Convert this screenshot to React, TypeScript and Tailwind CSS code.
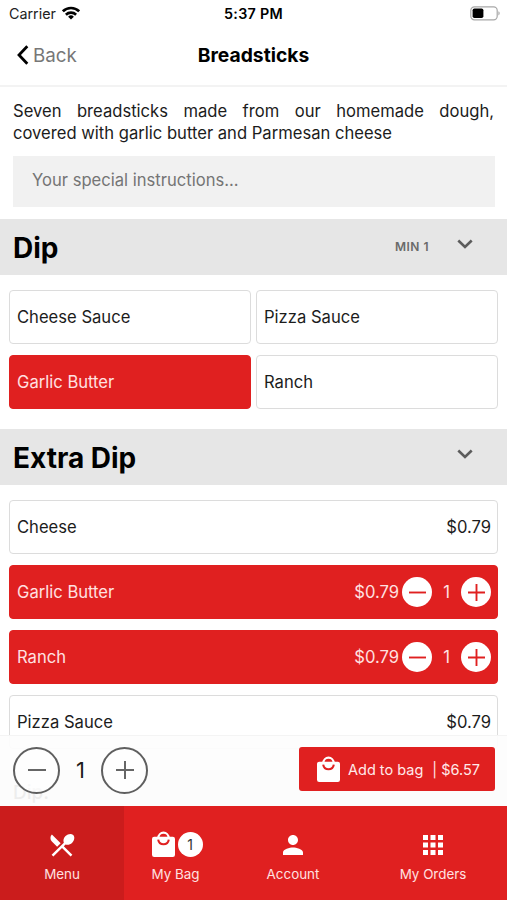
import { useState } from 'react';
import { MdApps, MdPerson, MdRestaurantMenu } from 'react-icons/md';
import clsx from 'clsx';

type Extra = { name: string; price: string; qty: number };

const DIPS = ['Cheese Sauce', 'Pizza Sauce', 'Garlic Butter', 'Ranch'];

const EXTRAS: Extra[] = [
  { name: 'Cheese', price: '$0.79', qty: 0 },
  { name: 'Garlic Butter', price: '$0.79', qty: 1 },
  { name: 'Ranch', price: '$0.79', qty: 1 },
  { name: 'Pizza Sauce', price: '$0.79', qty: 0 },
];

/* ─── Small drawings ───────────────────────────────────────────── */

function WifiIcon() {
  return (
    <svg viewBox="0 0 18 14" className="-mt-px ml-[6px] h-[14px] w-[18px]" fill="none" stroke="#000" strokeWidth="2.6">
      <path d="M0.9 5.3a11.6 11.6 0 0 1 16.2 0" />
      <path d="M3.9 8.7a7.3 7.3 0 0 1 10.2 0" />
      <path d="M9 13.6l-2.9-2.9a4.1 4.1 0 0 1 5.8 0z" fill="#000" stroke="none" />
    </svg>
  );
}

function BatteryIcon() {
  return (
    <svg viewBox="0 0 31 15" className="-mt-px h-[15px] w-[31px]">
      <rect x="0.8" y="0.8" width="26.4" height="13" rx="3.6" fill="#fff" stroke="#a8a8a8" strokeWidth="1.2" />
      <rect x="2.6" y="2.5" width="10.8" height="9.6" rx="1.8" fill="#000" />
      <path d="M28.4 5.2c1.7.6 1.7 3.6 0 4.2z" fill="#a8a8a8" />
    </svg>
  );
}

function BagIcon() {
  return (
    <svg viewBox="0 0 23 26" className="h-[26px] w-[23px] shrink-0" fill="none">
      <path d="M6.4 6.8a5.1 5.1 0 0 1 10.2 0" stroke="#fff" strokeWidth="2.2" />
      <rect y="5.8" width="23" height="20.2" rx="2.2" fill="#fff" />
      <path d="M6.2 8.6c.5 3 2.7 4.7 5.3 4.7s4.8-1.7 5.3-4.7" stroke="#e02020" strokeWidth="2.1" />
    </svg>
  );
}

function Chevron() {
  return (
    <svg viewBox="0 0 16 10" className="h-[10px] w-[16px]" fill="none" stroke="#5c5c5c" strokeWidth="2.6">
      <path d="M1.3 1.5L8 8l6.7-6.5" />
    </svg>
  );
}

function Sign({ plus, className }: { plus?: boolean; className: string }) {
  return (
    <svg viewBox="0 0 18 18" className={className} fill="none" stroke="currentColor" strokeWidth="2">
      <path d={plus ? 'M0 9h18M9 0v18' : 'M0 9h18'} />
    </svg>
  );
}

/* ─── Building blocks ──────────────────────────────────────────── */

function SectionHeader({ title, hint }: { title: string; hint?: string }) {
  return (
    <div className="flex h-14 shrink-0 items-center bg-[#e6e6e6] pr-[34px] pl-[13px]">
      <h2 className="mt-[2px] text-[28px] font-bold text-black">{title}</h2>
      {hint && <span className="ml-auto text-[12px] font-semibold tracking-[0.5px] text-[#6a6a6a]">{hint}</span>}
      <span className={clsx('-mt-[6px]', hint ? 'ml-[28px]' : 'ml-auto')}>
        <Chevron />
      </span>
    </div>
  );
}

function RoundButton({ plus }: { plus?: boolean }) {
  return (
    <button className="flex size-[30px] items-center justify-center rounded-full bg-white text-[#e02020]">
      <Sign plus={plus} className="size-[17px]" />
    </button>
  );
}

function ExtraRow({ item }: { item: Extra }) {
  const active = item.qty > 0;
  return (
    <div
      className={clsx(
        'flex h-[54px] shrink-0 items-center rounded-[4px] border pr-[6px] pl-[7px] text-[16.6px]',
        active ? 'border-[#e02020] bg-[#e02020] text-[#ffe1e1]' : 'border-[#dcdcdc] bg-white text-[#1c1c1c]',
      )}
    >
      <span>{item.name}</span>
      <span className="ml-auto">{item.price}</span>
      {active && (
        <div className="ml-[3px] flex items-center">
          <RoundButton />
          <span className="w-[29px] text-center">{item.qty}</span>
          <RoundButton plus />
        </div>
      )}
    </div>
  );
}

function StepButton({ plus }: { plus?: boolean }) {
  return (
    <button className="flex size-[47px] items-center justify-center rounded-full border-2 border-[#5f5f5f] bg-white/60 text-[#666]">
      <Sign plus={plus} className="size-[18px]" />
    </button>
  );
}

/* ─── Page ─────────────────────────────────────────────────────── */

export default function App() {
  const [dip, setDip] = useState('Garlic Butter');

  return (
    <div className="relative flex h-[900px] w-[507px] flex-col overflow-hidden bg-white font-['Inter','Liberation_Sans',sans-serif] text-[#1c1c1c]">
      {/* Status bar */}
      <div className="grid h-[27px] shrink-0 grid-cols-3 items-center pr-[6px] pl-[9px]">
        <div className="flex items-center text-[14.3px] text-[#222]">
          Carrier
          <WifiIcon />
        </div>
        <div className="-ml-[3px] text-center text-[14.3px] font-semibold tracking-[0.3px] text-black">5:37 PM</div>
        <div className="flex justify-end">
          <BatteryIcon />
        </div>
      </div>

      {/* Navigation header */}
      <header className="grid h-[60px] shrink-0 grid-cols-3 items-center border-b-2 border-[#f3f3f3] px-[17px] pb-[2px]">
        <button className="flex items-center text-[18.8px] text-[#777]">
          <svg viewBox="0 0 12 20" className="mr-[4px] h-[20px] w-[12px]" fill="none" stroke="#000" strokeWidth="2.8">
            <path d="M10.3 1.2L2 10l8.3 8.8" />
          </svg>
          <span className="mt-[2px]">Back</span>
        </button>
        <h1 className="text-center text-[19.3px] font-bold text-black">Breadsticks</h1>
      </header>

      <p className="mx-[13px] mt-[13px] h-[44px] shrink-0 text-[16.6px] leading-[22px]">
        <span className="block [text-align-last:justify]">Seven breadsticks made from our homemade dough,</span>
        <span className="block">covered with garlic butter and Parmesan cheese</span>
      </p>
      <div className="mt-3 mr-[12px] mb-3 ml-[13px] flex h-[51px] shrink-0 items-center bg-[#f1f1f1] pl-[19px] text-[16.6px] text-[#757575]">
        <span className="-mt-[2px]">Your special instructions...</span>
      </div>

      <SectionHeader title="Dip" hint="MIN 1" />
      <div className="mx-[9px] mt-[15px] mb-[20px] grid shrink-0 grid-cols-2 gap-x-[5px] gap-y-[11px]">
        {DIPS.map((name) => (
          <button
            key={name}
            onClick={() => setDip(name)}
            className={clsx(
              'h-[54px] rounded-[4px] border pl-[7px] text-left text-[16.6px]',
              name === dip ? 'border-[#e02020] bg-[#e02020] text-[#ffe1e1]' : 'border-[#dcdcdc] bg-white',
            )}
          >
            {name}
          </button>
        ))}
      </div>

      <SectionHeader title="Extra Dip" />
      <div className="mx-[9px] mt-[15px] flex shrink-0 flex-col gap-[11px]">
        {EXTRAS.map((item) => (
          <ExtraRow key={item.name} item={item} />
        ))}
      </div>
      <div className="mt-[21px] h-14 shrink-0 bg-[#e6e6e6] pt-[9px] pl-[13px] text-[19px] font-medium text-[#222]">Dip:</div>

      <div className="absolute inset-x-0 bottom-0">
        <div className="flex h-[71px] items-center border-t border-[#f4f4f4] bg-[#fdfdfd]/93 pr-[12px] pb-[2px] pl-[13px]">
          <StepButton />
          <span className="w-[41px] text-center text-[22px]">1</span>
          <StepButton plus />
          <button className="mt-[-2px] ml-auto flex h-11 w-[196px] items-center rounded-[3px] bg-[#e02020] pl-[18px] text-[14.5px] text-[#ffe9e9]">
            <BagIcon />
            <span className="mt-px ml-[8px]">Add to bag</span>
            <span className="mt-px ml-auto pr-[15px]">| $6.57</span>
          </button>
        </div>
        <nav className="flex h-[94px] bg-[#e02020] text-[13.4px] text-[#ffe1e1]">
          <div className="flex w-[124px] flex-col items-center bg-[#cb1c1c] pt-[24px]">
            <MdRestaurantMenu className="size-[30px] text-white" />
            <span className="mt-[4px]">Menu</span>
          </div>
          <div className="flex w-[103px] flex-col items-center pt-[24px]">
            <div className="ml-[3px] flex h-[28px] items-center">
              <BagIcon />
              <span className="ml-[3px] flex size-[25px] items-center justify-center rounded-full bg-white text-[14px] text-[#333]">
                1
              </span>
            </div>
            <span className="mt-[6px]">My Bag</span>
          </div>
          <div className="flex w-[132px] flex-col items-center pt-[24px]">
            <MdPerson className="size-[30px] text-white" />
            <span className="mt-[4px]">Account</span>
          </div>
          <div className="flex w-[148px] flex-col items-center pt-[24px]">
            <MdApps className="size-[30px] text-white" />
            <span className="mt-[4px]">My Orders</span>
          </div>
        </nav>
      </div>
    </div>
  );
}
